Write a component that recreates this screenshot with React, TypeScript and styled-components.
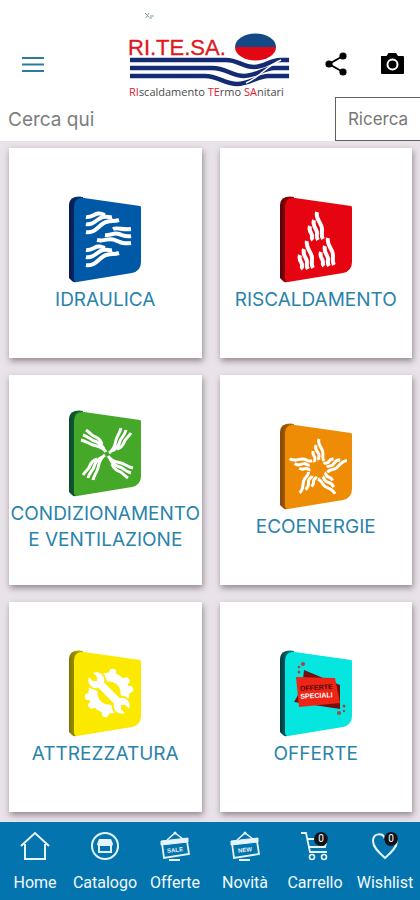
import React from 'react';
import styled, { createGlobalStyle } from 'styled-components';

const GlobalStyle = createGlobalStyle`
  * { box-sizing: border-box; }
  body { margin: 0; background: #e9e2e8; font-family: Inter, "Open Sans", sans-serif; }
  button, input { font-family: inherit; }
`;

const Page = styled.div`
  display: flex;
  flex-direction: column;
  min-height: 100vh;
`;

const Header = styled.header`
  display: grid;
  grid-template-columns: 1fr 164px 1fr;
  height: 97px;
  padding: 0 14px 0 20px;
  background: #fff;
`;

const HeaderSide = styled.div<{ $end?: boolean }>`
  display: flex;
  align-items: center;
  justify-content: ${(p) => (p.$end ? 'flex-end' : 'flex-start')};
  gap: 28px;
  padding-top: 30px;
`;

const IconButton = styled.button`
  display: flex;
  padding: 0;
  border: 0;
  background: none;
  color: #000;
`;

const LogoLink = styled.a`
  display: block;
  height: 97px;
  svg { display: block; }
`;

const SearchForm = styled.form`
  display: flex;
  height: 44px;
  background: #fff;
`;

const SearchInput = styled.input`
  flex: 1;
  min-width: 0;
  padding: 0 8px;
  border: 0;
  outline: 0;
  background: none;
  font-size: 19px;
  color: #777;
  &::placeholder { color: #7d7d7d; opacity: 1; }
`;

const SearchButton = styled.button`
  width: 85px;
  padding: 0;
  border: 1px solid #606060;
  border-right: 0;
  background: #fff;
  font-size: 17px;
  color: #777;
`;

const Grid = styled.main`
  flex: 1;
  display: grid;
  grid-template-columns: 1fr 1fr;
  grid-auto-rows: minmax(210px, auto);
  align-content: start;
  gap: 17px 18px;
  padding: 7px 8px 10px 9px;
`;

const Card = styled.a`
  display: flex;
  flex-direction: column;
  align-items: center;
  justify-content: center;
  gap: 4px;
  padding-top: 2px;
  background: #fff;
  box-shadow: 1px 3px 6px rgba(60, 45, 60, 0.5);
  color: #2a83ab;
  font-size: 19px;
  line-height: 26px;
  text-align: center;
  text-decoration: none;
  svg { display: block; }
`;

const Nav = styled.nav`
  position: sticky;
  bottom: 0;
  display: grid;
  grid-template-columns: repeat(6, 1fr);
  height: 78px;
  background: #0474ae;
`;

const NavItem = styled.a`
  display: flex;
  flex-direction: column;
  align-items: center;
  gap: 9px;
  padding-top: 8px;
  color: #f2faff;
  font-family: Roboto, sans-serif;
  font-size: 16px;
  line-height: 24px;
  text-decoration: none;
`;

const NavIcon = styled.span`
  position: relative;
  display: block;
  width: 32px;
  height: 32px;
  svg { display: block; }
`;

const Badge = styled.span`
  position: absolute;
  top: 2px;
  right: 3px;
  width: 14px;
  height: 14px;
  border-radius: 50%;
  background: #101418;
  color: #fff;
  font-size: 10px;
  line-height: 14px;
  text-align: center;
`;

const MenuIcon = () => (
  <svg width="26" height="26" viewBox="0 0 26 26" stroke="#2b7c9c" strokeWidth="2">
    <path d="M2 7H24M2 13.500H24M2 20H24" />
  </svg>
);

const ShareIcon = () => (
  <svg width="28" height="28" viewBox="0 0 28 28">
    <path d="M21 6L7 14L21 22" fill="none" stroke="#000" strokeWidth="2" />
    <circle cx="21" cy="6" r="3.600" />
    <circle cx="7" cy="14" r="3.600" />
    <circle cx="21" cy="22" r="3.600" />
  </svg>
);

const CameraIcon = () => (
  <svg width="28" height="28" viewBox="0 0 28 28">
    <path d="M3 6H8.500L10.500 3H18L20 6H25Q26 6 26 7V23Q26 24 25 24H4Q3 24 3 23Z" />
    <circle cx="14.500" cy="14.500" r="5" fill="none" stroke="#fff" strokeWidth="2" />
  </svg>
);

const Logo = () => (
  <svg width="164" height="97" viewBox="131 0 164 97" overflow="visible" role="img" aria-label="RI.TE.SA.">
    <path d="M145 13L149 17M149 13L146 18M150 16H154M149 18H152" fill="none" stroke="#7fa3a8" strokeWidth="1" />
    <text x="128" y="55" fontFamily="Liberation Sans, sans-serif" fontSize="22" fill="#e01820" stroke="#e01820" strokeWidth="0.300">RI.TE.SA.</text>
    <g fill="none" stroke="#142a72" strokeWidth="4.400">
      <path d="M130 60H226C238 60 243 67 254 67C265 67 270 60 280 60H289" />
      <path d="M130 68H212C226 68 232 76 244 76C256 76 264 68 274 68H289" />
      <path d="M130 76H205C218 76 225 84 237 84C249 84 258 76 268 76H289" />
    </g>
    <path d="M246 83C259 78 266 66 281 60" fill="none" stroke="#fff" strokeWidth="1.500" />
    <path d="M235 47A20.500 13.500 0 0 1 276 47Z" fill="#134a86" />
    <path d="M235 47A20.500 13.500 0 0 0 276 47Z" fill="#e30613" />
    <text x="129" y="96" fontFamily="Open Sans, sans-serif" fontSize="11" fill="#4a4a4a">
      <tspan fill="#e02030">RI</tspan>scaldamento <tspan fill="#e02030">TE</tspan>rmo <tspan fill="#e02030">SA</tspan>nitari
    </text>
  </svg>
);

type TileProps = { face: string; side: string; edge: string; children: React.ReactNode };

const Tile = ({ face, side, edge, children }: TileProps) => {
  const id = 'side-' + face.slice(1);
  return (
    <svg width="72" height="87" viewBox="0 0 72 87" aria-hidden="true">
      <defs>
        <linearGradient id={id} x1="0" x2="1" y1="0" y2="0">
          <stop offset="0" stopColor={side} />
          <stop offset="1" stopColor={edge} />
        </linearGradient>
      </defs>
      <path d="M0 9Q0 3 6 1Q10 0 14 1V80L7 86Q5 87 3 85L0 82Z" fill={`url(#${id})`} />
      <path d="M5 11Q5 1 15 2L71 10Q72 10 72 12V66Q72 75 63 77L8 86Q5 86 5 82Z" fill={face} />
      <g fill="none" stroke="#fff">{children}</g>
    </svg>
  );
};

const WaterMark = () => (
  <Tile face="#0059a6" side="#061a4e" edge="#0c3c80">
    {[0, 33].map((y) => (
      <g key={y} transform={`translate(0 ${y})`} strokeWidth="4">
        <path d="M17 21C22 22 25 18 29 17.500S32 18 36 19" />
        <path d="M17 28C25 30 28 22 34 21S39 22 43 21" />
        <path d="M17 36C27 38 30 28 37 26S44 26 50 24" />
      </g>
    ))}
    <g strokeWidth="4">
      <path d="M44 33C48 31 53 34 62 33" />
      <path d="M36 39C43 40 44 36 50 38S57 41 62 40" />
      <path d="M28 44C37 46 39 41 46 44S55 48 62 47" />
    </g>
  </Tile>
);

const HeatMark = () => (
  <Tile face="#e5040f" side="#5e0306" edge="#a8060b">
    {[[28, 16], [18, 45], [39, 42]].map(([x, y]) => (
      <g key={x} transform={`translate(${x} ${y})`} strokeWidth="4">
        <path d="M9 0C7 7 14 11 14 17S13 24 15 27" />
        <path d="M6 8C4 14 9 17 9 21S8 25 10 28" />
        <path d="M2 14C0 19 4 21 4 24S3 26 5 28" />
      </g>
    ))}
  </Tile>
);

const FanMark = () => (
  <Tile face="#45a829" side="#0b4a2a" edge="#11713a">
    {[0, 90, 180, 270].map((a) => (
      <g key={a} transform={`rotate(${a} 38 44)`} strokeWidth="3">
        <path d="M40 43C46 39 46 34 47 30S51 23 52 18" />
        <path d="M43 41C51 37 50 32 52 29S56 24 57 20" />
        <path d="M48 39C56 36 54 32 57 29S60 26 62 23" />
      </g>
    ))}
  </Tile>
);

const SunMark = () => (
  <Tile face="#ee8d05" side="#884806" edge="#c66e05">
    {[0, 72, 144, 216, 288].map((a) => (
      <g key={a} transform={`rotate(${a} 38 46)`} strokeWidth="3">
        <path d="M39 16C37 22 43 25 43 30S42 35 44 38" />
        <path d="M36 22C34 28 39 29 39 32S38 35 39 37" />
        <path d="M33 28C32 33 35 33 35 35S34 37 35 39" />
      </g>
    ))}
  </Tile>
);

const ToolsMark = () => (
  <Tile face="#fbea00" side="#7c7400" edge="#c6b900">
    <circle cx="40" cy="43" r="16" strokeWidth="9" />
    <g strokeWidth="7" strokeLinecap="round">
      {[10, 55, 80, 190, 235, 260].map((a) => (
        <path key={a} d="M40 27V22" transform={`rotate(${a} 40 43)`} />
      ))}
    </g>
    <g transform="translate(40 43) rotate(45)" stroke="none">
      <g fill="#fbea00">
        <rect x="-18" y="-7" width="36" height="14" />
        <circle cx="-18" cy="0" r="10" />
        <circle cx="18" cy="0" r="10" />
        <rect x="-30" y="-10" width="12" height="20" />
        <rect x="18" y="-10" width="12" height="20" />
      </g>
      <g fill="#fff">
        <rect x="-18" y="-4" width="36" height="8" />
        <circle cx="-18" cy="0" r="8" />
        <circle cx="18" cy="0" r="8" />
      </g>
      <g fill="#fbea00">
        <path d="M-27 -3H-20L-17 0L-20 3H-27Z" />
        <path d="M27 -3H20L17 0L20 3H27Z" />
      </g>
    </g>
  </Tile>
);

const OffersMark = () => (
  <Tile face="#05e6e1" side="#04393f" edge="#078a92">
    <g stroke="none">
      <path d="M24 20L60 35V59L14 52L22 38Z" fill="#76100f" />
      <path d="M16 27L55 28L60 53L19 57Z" fill="#ee2417" />
      <g fill="#a84446">
        <circle cx="23" cy="14" r="2" /><circle cx="19" cy="17" r="1.300" />
        <circle cx="19" cy="22" r="1.500" /><circle cx="59" cy="63" r="2" />
        <circle cx="64" cy="56" r="1.500" /><circle cx="64" cy="61" r="1.200" />
      </g>
      <g fontFamily="Liberation Sans, sans-serif" fontSize="7" fontWeight="700" transform="rotate(-3 36 40)">
        <text x="20" y="40" fill="#500b0b">OFFERTE</text>
        <text x="20" y="48" fill="#fff">SPECIALI</text>
      </g>
    </g>
  </Tile>
);

const Line = ({ children }: { children: React.ReactNode }) => (
  <svg width="32" height="32" viewBox="0 0 32 32" fill="none" stroke="#e6f5fc" strokeWidth="2" aria-hidden="true">
    {children}
  </svg>
);

const HomeIcon = () => (
  <Line><path d="M2 16L16 3L30 16M6 14V29H26V14" /></Line>
);

const CatalogIcon = () => (
  <Line>
    <circle cx="16" cy="16" r="13" />
    <path d="M10 9H22L24 14Q24 16 22 16H10Q8 16 8 14Z" fill="#e6f5fc" stroke="none" />
    <path d="M10 15V22H22V15" />
  </Line>
);

const SignIcon = ({ word }: { word: string }) => (
  <Line>
    <path d="M8 10L16 3L24 9" strokeWidth="1.500" />
    <circle cx="16" cy="3" r="1.500" fill="#e6f5fc" stroke="none" />
    <path d="M2 11L29 8V12L2 15Z" fill="#e6f5fc" strokeWidth="1" />
    <path d="M3 13L5 28L30 24L28 11M10 30H21" strokeWidth="1.800" />
    <text x="16" y="22" textAnchor="middle" transform="rotate(-6 16 20)" fontFamily="Liberation Sans, sans-serif" fontSize="6" fontWeight="700" fill="#e6f5fc" stroke="none">{word}</text>
  </Line>
);

const CartIcon = () => (
  <Line>
    <path d="M2 3H7L11 22H28M9 9H28L26 17H10" strokeWidth="1.800" />
    <circle cx="13" cy="27" r="2.500" strokeWidth="1.600" />
    <circle cx="25" cy="27" r="2.500" strokeWidth="1.600" />
  </Line>
);

const HeartIcon = () => (
  <Line><path d="M16 28C9 22 4 17 4 11C4 3 14 2 16 9C18 2 28 3 28 11C28 17 23 22 16 28Z" /></Line>
);

const categories = [
  { label: 'IDRAULICA', Mark: WaterMark },
  { label: 'RISCALDAMENTO', Mark: HeatMark },
  { label: 'CONDIZIONAMENTO E VENTILAZIONE', Mark: FanMark },
  { label: 'ECOENERGIE', Mark: SunMark },
  { label: 'ATTREZZATURA', Mark: ToolsMark },
  { label: 'OFFERTE', Mark: OffersMark },
];

const tabs: { label: string; icon: React.ReactNode; count?: number }[] = [
  { label: 'Home', icon: <HomeIcon /> },
  { label: 'Catalogo', icon: <CatalogIcon /> },
  { label: 'Offerte', icon: <SignIcon word="SALE" /> },
  { label: 'Novità', icon: <SignIcon word="NEW" /> },
  { label: 'Carrello', icon: <CartIcon />, count: 0 },
  { label: 'Wishlist', icon: <HeartIcon />, count: 0 },
];

export default function App() {
  return (
    <Page>
      <GlobalStyle />
      <Header>
        <HeaderSide>
          <IconButton type="button" aria-label="Menu"><MenuIcon /></IconButton>
        </HeaderSide>
        <LogoLink href="#home"><Logo /></LogoLink>
        <HeaderSide $end>
          <IconButton type="button" aria-label="Condividi"><ShareIcon /></IconButton>
          <IconButton type="button" aria-label="Fotocamera"><CameraIcon /></IconButton>
        </HeaderSide>
      </Header>
      <SearchForm role="search" onSubmit={(e) => e.preventDefault()}>
        <SearchInput type="text" placeholder="Cerca qui" aria-label="Cerca qui" />
        <SearchButton type="submit">Ricerca</SearchButton>
      </SearchForm>
      <Grid>
        {categories.map(({ label, Mark }) => (
          <Card key={label} href="#categoria">
            <Mark />
            <span>{label}</span>
          </Card>
        ))}
      </Grid>
      <Nav>
        {tabs.map(({ label, icon, count }) => (
          <NavItem key={label} href="#tab">
            <NavIcon>
              {icon}
              {count !== undefined && <Badge>{count}</Badge>}
            </NavIcon>
            {label}
          </NavItem>
        ))}
      </Nav>
    </Page>
  );
}
